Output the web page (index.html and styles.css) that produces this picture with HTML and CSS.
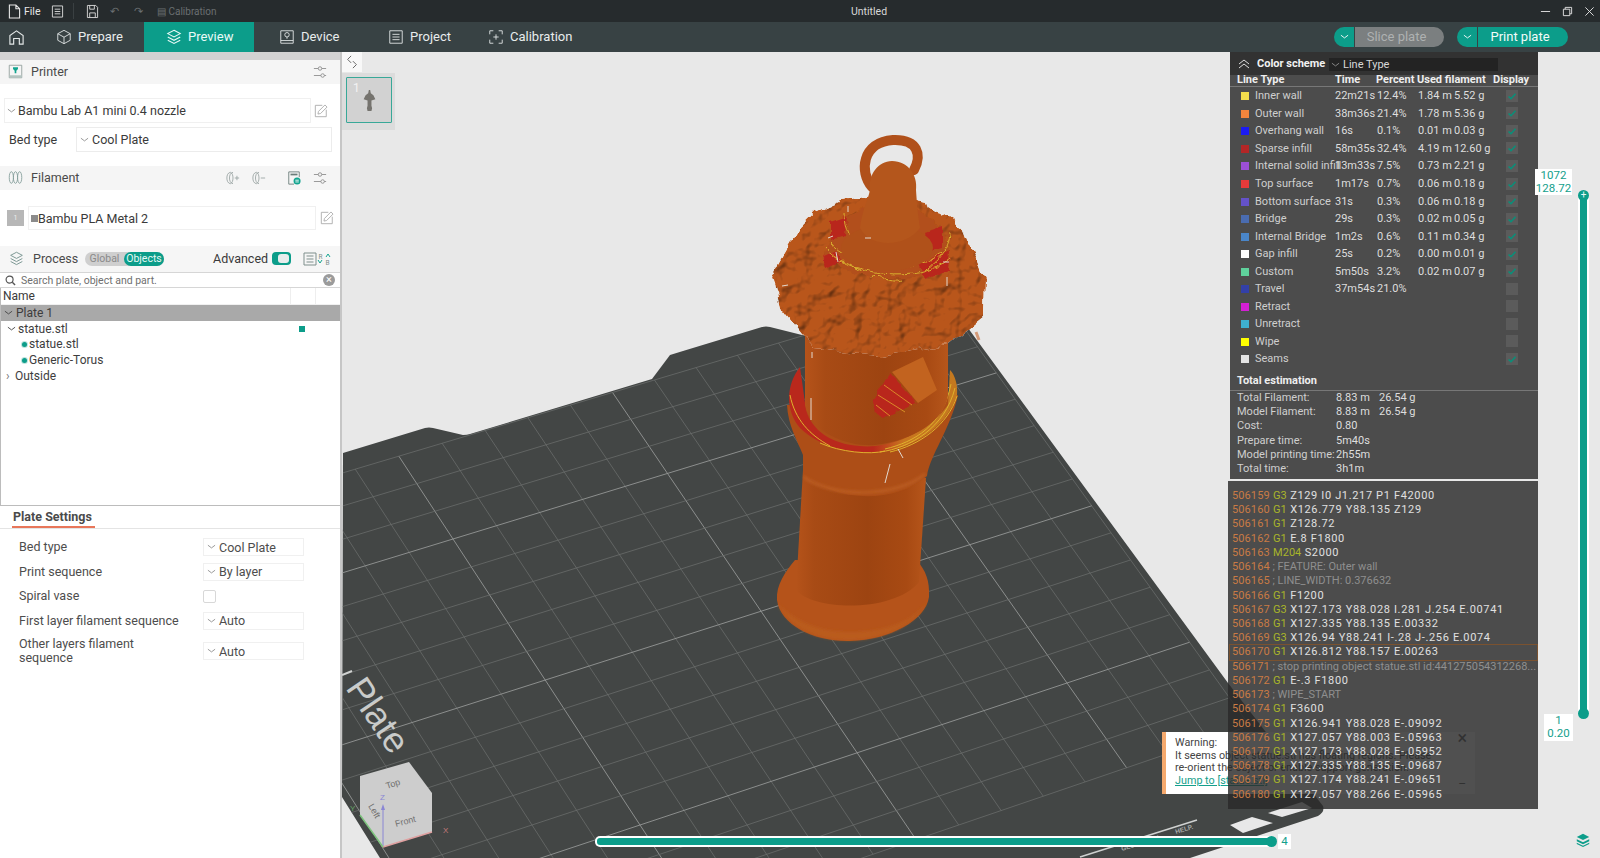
FILE: index.html
```html
<!DOCTYPE html>
<html lang="en">
<head>
<meta charset="utf-8">
<title>Untitled</title>
<link rel="stylesheet" href="styles.css">
</head>
<body>
<svg class="defs" aria-hidden="true">
  <symbol id="chev" viewBox="0 0 10 6"><path d="M1 1l4 3 4-3" fill="none" stroke="currentColor" stroke-width="1"/></symbol>
  <symbol id="edit" viewBox="0 0 16 16"><path d="M1.5 1.5h8M1.5 1.5v13h12.5v-8" fill="none" stroke="#a9a9a9"/><path d="M4.5 11.5l.6-3 7.4-7.4 2.4 2.4-7.4 7.4z" fill="none" stroke="#a9a9a9"/></symbol>
  <symbol id="tune" viewBox="0 0 16 16"><path d="M1 4h5M10 4h5M1 12h8M13 12h2" fill="none" stroke="#8d8d8d"/><circle cx="8" cy="4" r="2" fill="none" stroke="#8d8d8d"/><circle cx="11" cy="12" r="2" fill="none" stroke="#8d8d8d"/></symbol>
  <symbol id="layers" viewBox="0 0 18 18"><path d="M9 1.5l7 3.7-7 3.7-7-3.7z" fill="none" stroke="currentColor" stroke-width="1.2"/><path d="M2 9l7 3.7L16 9M2 12.6l7 3.7 7-3.7" fill="none" stroke="currentColor" stroke-width="1.2"/></symbol>
  <symbol id="layers-solid" viewBox="0 0 18 18"><path d="M9 1l8 4-8 4-8-4z" fill="currentColor"/><path d="M1 8l8 4 8-4v2.500l-8 4-8-4z" fill="currentColor"/><path d="M1 12.500l8 4 8-4V14l-8 4-8-4z" fill="currentColor"/></symbol>
  <symbol id="tick" viewBox="0 0 12 12"><path d="M2.5 6.5l2.5 2.2 4.5-5" fill="none" stroke="#0b8f79" stroke-width="1.6"/></symbol>
</svg>

<header class="titlebar">
  <svg class="ti" viewBox="0 0 14 16"><path d="M1.5 1h7l4 4v10h-11zM8.5 1v4h4" fill="none" stroke="#e6e6e6" stroke-width="1.2"/></svg>
  <span class="file">File</span>
  <svg class="ti ti-menu" viewBox="0 0 14 16"><path d="M1.5 2h11v12h-11zM4 5.5h6M4 8h6M4 10.5h6" fill="none" stroke="#d8d8d8"/></svg>
  <span class="tsep"></span>
  <svg class="ti ti-save" viewBox="0 0 14 16"><path d="M1.5 1.5h9l2 2v11h-11zM4 1.5v4h5v-4M4 14.5v-5h6v5" fill="none" stroke="#d8d8d8"/></svg>
  <span class="dim undo">↶</span>
  <span class="dim redo">↷</span>
  <span class="dim calib">▤ Calibration</span>
  <span class="doc">Untitled</span>
  <div class="winbtns">
    <svg class="wb" viewBox="0 0 12 12"><path d="M1 6h10" stroke="#e6e6e6" fill="none"/></svg>
    <svg class="wb" viewBox="0 0 12 12"><path d="M1.5 3.5h7v7h-7zM3.5 3.5v-2h7v7h-2" stroke="#e6e6e6" fill="none"/></svg>
    <svg class="wb" viewBox="0 0 12 12"><path d="M1.5 1.5l9 9M10.5 1.5l-9 9" stroke="#e6e6e6" fill="none"/></svg>
  </div>
</header>

<nav class="navbar">
  <a class="home"><svg viewBox="0 0 18 18"><path d="M2 16V7l7-5 7 5v9h-4v-6H6v6z" fill="none" stroke="#e4e8e8" stroke-width="1.2"/></svg></a>
  <a class="tab t-prepare"><svg viewBox="0 0 18 18"><path d="M9 1.5l7 3.8v7.4l-7 3.8-7-3.8V5.300zM2 5.300l7 3.900 7-3.900M9 9.200v7.300" fill="none" stroke="#e4e8e8"/></svg>Prepare</a>
  <a class="tab t-preview"><svg viewBox="0 0 18 18" class="ic-white"><use href="#layers"/></svg>Preview</a>
  <a class="tab t-device"><svg viewBox="0 0 18 18"><path d="M2 2h14v14H2zM2 13h14" fill="none" stroke="#e4e8e8"/><circle cx="9" cy="6.500" r="2.500" fill="none" stroke="#e4e8e8"/><path d="M9 9v2" stroke="#e4e8e8"/></svg>Device</a>
  <a class="tab t-project"><svg viewBox="0 0 18 18"><path d="M2 2h14v14H2zM5 6h8M5 9h8M5 12h8" fill="none" stroke="#e4e8e8"/></svg>Project</a>
  <a class="tab t-calib"><svg viewBox="0 0 18 18"><path d="M2 6V2h4M12 2h4v4M16 12v4h-4M6 16H2v-4M9 6v6M6 9h6" fill="none" stroke="#e4e8e8"/></svg>Calibration</a>
  <div class="actions">
    <div class="split"><span class="drop"><svg class="chev"><use href="#chev"/></svg></span><span class="act act-off">Slice plate</span></div>
    <div class="split"><span class="drop"><svg class="chev"><use href="#chev"/></svg></span><span class="act act-on">Print plate</span></div>
  </div>
</nav>

<main class="workspace">
  <aside class="sidebar">
    <div class="strip"></div>
    <section class="shead h-printer">
      <svg class="sic" viewBox="0 0 18 18"><path d="M1.500 1.500h15v15h-15z" fill="none" stroke="#8d9a98"/><path d="M1.500 13.500h15v3h-15z" fill="#b4c4c1"/><path d="M6 4h6v2l-2 2v3H8V8L6 6z" fill="#12a48f"/></svg>
      <span class="stitle">Printer</span>
      <svg class="tune"><use href="#tune"/></svg>
    </section>
    <div class="printer-row">
      <div class="sel sel-printer"><svg class="chev"><use href="#chev"/></svg>Bambu Lab A1 mini 0.4 nozzle</div>
      <svg class="edit"><use href="#edit"/></svg>
    </div>
    <div class="bed-row">
      <span class="bed-label">Bed type</span>
      <div class="sel sel-bed"><svg class="chev"><use href="#chev"/></svg>Cool Plate</div>
    </div>
    <section class="shead h-filament">
      <svg class="sic" viewBox="0 0 18 18"><g fill="none" stroke="#7f9a96"><ellipse cx="4" cy="9" rx="2.500" ry="7"/><ellipse cx="9" cy="9" rx="2.500" ry="7"/><ellipse cx="14" cy="9" rx="2.500" ry="7"/></g></svg>
      <span class="stitle">Filament</span>
      <svg class="fic fic-add" viewBox="0 0 16 16"><path d="M5 1.500C2 2 1 5 1 8s1 6 4 6.500M5 1.500C7 2 8 5 8 8s-1 6-3 6.500M8 1.500C5 2 4 5 4 8s1 6 4 6.500M10 8h5M12.500 5.500v5" fill="none" stroke="#9aa5a3"/></svg>
      <svg class="fic fic-del" viewBox="0 0 16 16"><path d="M5 1.500C2 2 1 5 1 8s1 6 4 6.500M5 1.500C7 2 8 5 8 8s-1 6-3 6.500M8 1.500C5 2 4 5 4 8s1 6 4 6.500M10 8h5" fill="none" stroke="#9aa5a3"/></svg>
      <svg class="fic fic-sync" viewBox="0 0 16 16"><path d="M2 1h12v6M2 1v14h6" fill="none" stroke="#6a7c79"/><path d="M4 3h8v2H4z" fill="#6a7c79"/><circle cx="11.500" cy="11.500" r="4" fill="#12a48f"/><path d="M9.500 10.500h4M9.500 12.500h4" stroke="#fff"/></svg>
      <svg class="tune"><use href="#tune"/></svg>
    </section>
    <div class="fil-row">
      <span class="fil-num">1</span>
      <div class="sel sel-fil"><span class="mini-sq"></span>Bambu PLA Metal 2</div>
      <svg class="edit"><use href="#edit"/></svg>
    </div>
    <section class="proc">
      <svg class="sic ic-muted" viewBox="0 0 18 18"><use href="#layers"/></svg>
      <span class="stitle">Process</span>
      <div class="seg"><span class="seg-a">Global</span><span class="seg-b">Objects</span></div>
      <span class="adv">Advanced</span>
      <span class="toggle"><i></i></span>
      <svg class="cmp" viewBox="0 0 29 14"><path d="M1 1h12v12H1zM3.500 4h7M3.500 7h7M3.500 10h7" fill="none" stroke="#7f8f8c"/><text x="15.500" y="6.500" class="cmp-t">R</text><text x="22.500" y="13" class="cmp-t">B</text><path d="M23 5l2-3 2 3M19 8l-2 3-2-3" fill="none" stroke="#12a48f"/></svg>
    </section>
    <div class="search">
      <svg class="lens" viewBox="0 0 12 12"><circle cx="5" cy="5" r="3.800" fill="none" stroke="#555" stroke-width="1.300"/><path d="M8 8l3 3" stroke="#555" stroke-width="1.500"/></svg>
      <span>Search plate, object and part.</span>
      <span class="clear">×</span>
    </div>
    <div class="tree">
      <div class="tree-head"><span class="th-name">Name</span><span class="th-c"></span><span class="th-c"></span></div>
      <div class="node n-plate"><svg class="chev"><use href="#chev"/></svg>Plate 1</div>
      <div class="node n-obj"><svg class="chev"><use href="#chev"/></svg>statue.stl<span class="mark"></span></div>
      <div class="node n-part"><i class="dot"></i>statue.stl</div>
      <div class="node n-part"><i class="dot"></i>Generic-Torus</div>
      <div class="node n-out"><span class="caret">›</span>Outside</div>
    </div>
    <section class="settings">
      <div class="set-tab"><span>Plate Settings</span></div>
      <div class="set-row"><label>Bed type</label><div class="sel sel-s"><svg class="chev"><use href="#chev"/></svg>Cool Plate</div></div>
      <div class="set-row"><label>Print sequence</label><div class="sel sel-s"><svg class="chev"><use href="#chev"/></svg>By layer</div></div>
      <div class="set-row"><label>Spiral vase</label><span class="cb"></span></div>
      <div class="set-row"><label>First layer filament sequence</label><div class="sel sel-s"><svg class="chev"><use href="#chev"/></svg>Auto</div></div>
      <div class="set-row tall"><label>Other layers filament<br>sequence</label><div class="sel sel-s"><svg class="chev"><use href="#chev"/></svg>Auto</div></div>
    </section>
  </aside>

  <section class="viewport">
    <svg class="scene" viewBox="342 52 1258 806" preserveAspectRatio="none">
      <defs>
        <clipPath id="plateclip"><path id="plateshape" d="M343 453L425 428Q429 427 433 428L463 435Q467 435 470 434L652 379L670 355L683 351L762 327Q766 326 770 327L802 335L812 335L925 283L935 283L1228 683L1323 806Q1325 812 1318 816L1190 858L380 858L342 797Z"/></clipPath>
        <linearGradient id="body" x1="0" x2="1" y1="0" y2="0">
          <stop offset="0" stop-color="#b5531a"/><stop offset=".14" stop-color="#a84b15"/><stop offset=".55" stop-color="#9d4411"/><stop offset=".85" stop-color="#a84a13"/><stop offset="1" stop-color="#b6561b"/>
        </linearGradient>
        <linearGradient id="rimband" x1="0" x2="1" y1="0" y2="0">
          <stop offset="0" stop-color="#b9281c"/><stop offset=".5" stop-color="#b9281c"/><stop offset=".68" stop-color="#c9761f"/><stop offset="1" stop-color="#c4791f"/>
        </linearGradient>
        <filter id="lumpy" x="-5%" y="-5%" width="110%" height="110%" color-interpolation-filters="sRGB">
          <feTurbulence type="fractalNoise" baseFrequency=".05" numOctaves="3" seed="7" result="n"/>
          <feDisplacementMap in="SourceGraphic" in2="n" scale="12" xChannelSelector="R" yChannelSelector="G" result="d"/>
          <feDiffuseLighting in="n" surfaceScale="4" diffuseConstant="1.150" lighting-color="#fff" result="l"><feDistantLight azimuth="235" elevation="62"/></feDiffuseLighting>
          <feBlend in="d" in2="l" mode="multiply" result="m"/>
          <feComposite in="m" in2="d" operator="in"/>
        </filter>
        <filter id="wavy" x="-10%" y="-10%" width="120%" height="120%">
          <feTurbulence type="fractalNoise" baseFrequency=".12" numOctaves="2" seed="3" result="w"/>
          <feDisplacementMap in="SourceGraphic" in2="w" scale="7" xChannelSelector="R" yChannelSelector="G"/>
        </filter>
        <filter id="soft"><feGaussianBlur stdDeviation="1.500"/></filter>
      </defs>

      <use href="#plateshape" class="plate"/>
      <g id="grid" clip-path="url(#plateclip)"></g>
      <path class="hole" d="M1230 825L1252 817L1273 823L1243 833Z"/>
      <path class="hole" d="M1268 813L1302 802L1312 808L1282 817Z"/>
      <path class="stripe" d="M1080 857L1197 820"/>
      <text class="plate-small" transform="translate(1122 851) rotate(-17)">GLUE STICK</text>
      <text class="plate-small" transform="translate(1176 834) rotate(-17)">HELP.</text>
      <text class="plate-word" transform="translate(345 688) rotate(56)">Plate</text>
      <path class="stripe-g" d="M342 675L352 671"/>

      <!-- printed statue -->
      <path d="M872 187C859 172 862 142 893 140C918 139 922 155 914 170" fill="none" stroke="#b0501a" stroke-width="10" stroke-linecap="round"/>
      <path d="M795 560C785 572 776 585 777 600C780 625 815 642 850 641C890 640 926 620 929 597C930 580 925 570 918 562Z" fill="#b5531a"/>
      <path d="M803 470L796 590C815 612 895 612 919 582L926 478Z" fill="url(#body)"/>
      <path d="M778 604C790 628 815 640 850 640C890 639 918 622 928 600C915 622 885 632 850 632C820 632 795 622 778 604Z" fill="#ba5c1f" filter="url(#soft)"/>
      <path d="M787 405C788 425 797 440 803 455L803 472C830 502 895 505 927 476C930 455 950 430 958 395Z" fill="#ad4e17"/>
      <path d="M804 477C830 497 895 499 925 474" fill="none" stroke="#bd5f24" stroke-width="2.500" filter="url(#soft)"/>
      <path d="M800 367C786 385 785 410 800 428C820 447 850 454 875 453C910 450 945 430 957 395C958 385 955 375 950 370L948 405C925 438 880 449 860 446C830 444 812 430 806 410Z" fill="url(#rimband)"/>
      <path d="M880 452C910 448 945 428 955 388M885 449C915 442 943 425 951 384M890 452C920 445 948 425 957 396M820 443C840 452 870 455 885 451M790 395C795 420 810 435 830 446" fill="none" stroke="#dfb22d" stroke-width="1"/>
      <path d="M805 335L805 405C812 435 850 447 875 445C915 440 945 420 948 395L948 335Z" fill="url(#body)"/>
      <g filter="url(#wavy)"><path d="M873 400L890 373L917 403L883 418L875 414Z" fill="#b9261d"/></g>
      <path d="M878 395L905 412M884 385L912 405M876 405L890 416" fill="none" stroke="#e2a22c" stroke-width=".8"/>
      <path d="M892 372L923 357L937 390L918 403Z" fill="#c2631f"/>
      <path class="seam" d="M811 398V420M812 352V358M898 449L903 458M890 464L885 483"/>

      <g filter="url(#lumpy)">
        <path d="M840 200L817 210L800 227L772 275L780 307L800 333L815 350L880 356L948 345L983 317L984 280L963 227L925 203L885 195Z" fill="#b9561b"/>
      </g>
      <path d="M976 332L979 340" stroke="#d49a78" stroke-width="3"/>
      <g filter="url(#wavy)">
        <path d="M825 255C830 225 850 205 890 205C930 205 950 235 950 262C930 285 850 285 825 255Z" fill="#b2501a"/>
        <path d="M830 222L848 216L846 236L830 240ZM822 258L837 252L842 262L825 268ZM925 232L942 226L942 248L928 252ZM918 264L950 250L948 270L925 280Z" fill="#b9261e"/>
        <path d="M825 248C845 275 920 285 950 258M830 242C850 268 915 278 946 250M845 212C845 228 850 240 860 248M950 232C950 250 935 265 925 270M838 262C845 258 855 268 862 272M870 278C880 272 890 285 900 280" fill="none" stroke="#d9b030" stroke-width="1"/>
      </g>
      <ellipse cx="887" cy="248" rx="46" ry="23" fill="#b0511a"/>
      <path d="M860 228C862 210 868 200 870 190C868 175 878 161 892 161C908 161 918 175 916 190C917 205 918 215 920 228C905 248 870 248 860 228Z" fill="#b4561c"/>
      <path class="seam" d="M848 206V212M828 238L833 236M836 252L838 262M943 262L949 262M947 277V286M782 286L788 285M865 238L871 238"/>

      <!-- navigation cube -->
      <g class="cube">
        <path d="M360 776L409 762L432 793L432 832L383 847L360 815Z" fill="#cdcdcd"/>
        <text class="cube-t" transform="translate(387 789) rotate(-18)">Top</text>
        <text class="cube-t" transform="translate(396 827) rotate(-15)">Front</text>
        <text class="cube-t" transform="translate(368 806) rotate(60)">Left</text>
        <path d="M383 847V808" stroke="#8a86d4"/><path d="M383 804l-2 6h4z" fill="#8a86d4"/>
        <path d="M383 847L432 832" stroke="#e0a0a0" stroke-width="1.500"/>
        <path d="M383 847L360 815" stroke="#7dc47d" stroke-width="1.500"/>
        <text class="axis ax-z" x="380" y="800">Z</text>
        <text class="axis ax-x" x="443" y="833">X</text>
        <text class="axis ax-y" x="350" y="811">Y</text>
      </g>
    </svg>

    <button class="collapse"><svg viewBox="0 0 14 16"><path d="M6 1L2 5l4 4M8 7l4 4-4 4" fill="none" stroke="#555"/></svg></button>
    <div class="thumbs"><div class="thumb"><span>1</span>
      <svg viewBox="0 0 20 34"><path d="M9 1h2l1 5 4 3 3 6-6 2v8l1 4-1 4H7l-1-4 1-4v-8l-6-2 3-6 4-3z" fill="#75736e"/></svg>
    </div></div>

    <div class="warning">
      <div>Warning:</div>
      <div>It seems object statue.stl has floating regions. Please</div>
      <div>re-orient the object or enable support generation.</div>
      <a>Jump to [statue.stl]</a>
      <span class="w-x">×</span>
      <span class="w-m">–</span>
    </div>

    <section class="legend">
      <div class="lg-top">
        <svg class="lg-up" viewBox="0 0 12 10"><path d="M1 5l5-4 5 4M1 9l5-4 5 4" fill="none" stroke="#ddd"/></svg>
        <b>Color scheme</b>
        <div class="lg-sel"><svg class="chev"><use href="#chev"/></svg>Line Type</div>
      </div>
      <div class="lg-head"><span>Line Type</span><span>Time</span><span>Percent</span><span>Used filament</span><span>Display</span></div>
      <div class="lg-body">
        <div class="lg-row"><span class="name"><i class="c1"></i>Inner wall</span><span>22m21s</span><span>12.4%</span><span>1.84 m</span><span>5.52 g</span><span class="ck"><svg><use href="#tick"/></svg></span></div>
        <div class="lg-row"><span class="name"><i class="c2"></i>Outer wall</span><span>38m36s</span><span>21.4%</span><span>1.78 m</span><span>5.36 g</span><span class="ck"><svg><use href="#tick"/></svg></span></div>
        <div class="lg-row"><span class="name"><i class="c3"></i>Overhang wall</span><span>16s</span><span>0.1%</span><span>0.01 m</span><span>0.03 g</span><span class="ck"><svg><use href="#tick"/></svg></span></div>
        <div class="lg-row"><span class="name"><i class="c4"></i>Sparse infill</span><span>58m35s</span><span>32.4%</span><span>4.19 m</span><span>12.60 g</span><span class="ck"><svg><use href="#tick"/></svg></span></div>
        <div class="lg-row"><span class="name"><i class="c5"></i>Internal solid infill</span><span>13m33s</span><span>7.5%</span><span>0.73 m</span><span>2.21 g</span><span class="ck"><svg><use href="#tick"/></svg></span></div>
        <div class="lg-row"><span class="name"><i class="c6"></i>Top surface</span><span>1m17s</span><span>0.7%</span><span>0.06 m</span><span>0.18 g</span><span class="ck"><svg><use href="#tick"/></svg></span></div>
        <div class="lg-row"><span class="name"><i class="c7"></i>Bottom surface</span><span>31s</span><span>0.3%</span><span>0.06 m</span><span>0.18 g</span><span class="ck"><svg><use href="#tick"/></svg></span></div>
        <div class="lg-row"><span class="name"><i class="c8"></i>Bridge</span><span>29s</span><span>0.3%</span><span>0.02 m</span><span>0.05 g</span><span class="ck"><svg><use href="#tick"/></svg></span></div>
        <div class="lg-row"><span class="name"><i class="c9"></i>Internal Bridge</span><span>1m2s</span><span>0.6%</span><span>0.11 m</span><span>0.34 g</span><span class="ck"><svg><use href="#tick"/></svg></span></div>
        <div class="lg-row"><span class="name"><i class="c10"></i>Gap infill</span><span>25s</span><span>0.2%</span><span>0.00 m</span><span>0.01 g</span><span class="ck"><svg><use href="#tick"/></svg></span></div>
        <div class="lg-row"><span class="name"><i class="c11"></i>Custom</span><span>5m50s</span><span>3.2%</span><span>0.02 m</span><span>0.07 g</span><span class="ck"><svg><use href="#tick"/></svg></span></div>
        <div class="lg-row"><span class="name"><i class="c12"></i>Travel</span><span>37m54s</span><span>21.0%</span><span></span><span></span><span class="ck"></span></div>
        <div class="lg-row"><span class="name"><i class="c13"></i>Retract</span><span></span><span></span><span></span><span></span><span class="ck"></span></div>
        <div class="lg-row"><span class="name"><i class="c14"></i>Unretract</span><span></span><span></span><span></span><span></span><span class="ck"></span></div>
        <div class="lg-row"><span class="name"><i class="c15"></i>Wipe</span><span></span><span></span><span></span><span></span><span class="ck"></span></div>
        <div class="lg-row"><span class="name"><i class="c16"></i>Seams</span><span></span><span></span><span></span><span></span><span class="ck"><svg><use href="#tick"/></svg></span></div>
      </div>
      <div class="lg-total"><b>Total estimation</b></div>
      <div class="lg-stats">
        <div><span>Total Filament:</span><span>8.83 m</span><span>26.54 g</span></div>
        <div><span>Model Filament:</span><span>8.83 m</span><span>26.54 g</span></div>
        <div><span>Cost:</span><span>0.80</span><span></span></div>
        <div><span>Prepare time:</span><span>5m40s</span><span></span></div>
        <div><span>Model printing time:</span><span>2h55m</span><span></span></div>
        <div><span>Total time:</span><span>3h1m</span><span></span></div>
      </div>
    </section>

    <section class="gcode">
      <div><em>506159</em> <b>G3</b> Z129 I0 J1.217 P1 F42000</div>
      <div><em>506160</em> <b>G1</b> X126.779 Y88.135 Z129</div>
      <div><em>506161</em> <b>G1</b> Z128.72</div>
      <div><em>506162</em> <b>G1</b> E.8 F1800</div>
      <div><em>506163</em> <b>M204</b> S2000</div>
      <div class="cm"><em>506164</em> ; FEATURE: Outer wall</div>
      <div class="cm"><em>506165</em> ; LINE_WIDTH: 0.376632</div>
      <div><em>506166</em> <b>G1</b> F1200</div>
      <div><em>506167</em> <b>G3</b> X127.173 Y88.028 I.281 J.254 E.00741</div>
      <div><em>506168</em> <b>G1</b> X127.335 Y88.135 E.00332</div>
      <div><em>506169</em> <b>G3</b> X126.94 Y88.241 I-.28 J-.256 E.0074</div>
      <div class="cur"><em>506170</em> <b>G1</b> X126.812 Y88.157 E.00263</div>
      <div class="cm"><em>506171</em> ; stop printing object statue.stl id:441275054312268...</div>
      <div><em>506172</em> <b>G1</b> E-.3 F1800</div>
      <div class="cm"><em>506173</em> ; WIPE_START</div>
      <div><em>506174</em> <b>G1</b> F3600</div>
      <div><em>506175</em> <b>G1</b> X126.941 Y88.028 E-.09092</div>
      <div><em>506176</em> <b>G1</b> X127.057 Y88.003 E-.05963</div>
      <div><em>506177</em> <b>G1</b> X127.173 Y88.028 E-.05952</div>
      <div><em>506178</em> <b>G1</b> X127.335 Y88.135 E-.09687</div>
      <div><em>506179</em> <b>G1</b> X127.174 Y88.241 E-.09651</div>
      <div><em>506180</em> <b>G1</b> X127.057 Y88.266 E-.05965</div>
    </section>

    <div class="vslider"><i class="knob-top">+</i><i class="knob-bot"></i></div>
    <div class="vlabel vl-top">1072<br>128.72</div>
    <div class="vlabel vl-bot">1<br>0.20</div>
    <div class="hslider"><i></i></div>
    <div class="hlabel">4</div>
    <svg class="layer-btn"><use href="#layers-solid"/></svg>
  </section>
</main>
<script src="grid.js"></script>
</body>
</html>
```

FILE: styles.css
```css
* { box-sizing: border-box; }
html, body { margin: 0; height: 100%; }
body {
  width: 1600px; height: 858px; overflow: hidden;
  display: flex; flex-direction: column;
  font-family: Roboto, "Noto Sans", "Liberation Sans", sans-serif;
  font-size: 13px; color: #3a3a3a; background: #fff;
}
.defs { position: absolute; width: 0; height: 0; }
.chev { width: 9px; height: 6px; color: #8e8e8e; flex: none; }

/* title bar */
.titlebar {
  height: 22px; flex: none; background: #262b2d; color: #e6e6e6;
  display: flex; align-items: center; font-size: 10.5px; padding-left: 8px;
}
.ti { width: 13px; height: 15px; flex: none; }
.file { margin-left: 3px; width: 27px; }
.tsep { width: 1px; height: 16px; background: #3a4042; margin: 0 12px 0 9px; }
.dim { color: #6a6f71; }
.undo { margin-left: 11px; }
.redo { margin-left: 15px; }
.calib { margin-left: 14px; font-size: 10px; }
.doc { position: absolute; left: 851px; top: 5px; color: #d8d8d8; }
.winbtns { margin-left: auto; display: flex; gap: 11px; padding-right: 5px; }
.wb { width: 11px; height: 11px; }

/* nav */
.navbar {
  height: 30px; flex: none; background: #384244; color: #e8ecec;
  display: flex; align-items: stretch; position: relative;
}
.home { width: 32px; display: flex; align-items: center; justify-content: center; }
.home svg { width: 17px; height: 17px; }
.tab { display: flex; align-items: center; gap: 6px; font-size: 13px; padding-bottom: 1px; }
.tab svg { width: 16px; height: 16px; flex: none; }
.t-prepare { width: 112px; padding-left: 24px; }
.t-preview { width: 110px; padding-left: 22px; background: #0c9d8a; color: #eafaf7; }
.ic-white { color: #eafaf7; }
.t-device { width: 109px; padding-left: 25px; }
.t-project { width: 100px; padding-left: 25px; }
.t-calib { padding-left: 25px; }
.actions { margin-left: auto; display: flex; gap: 13px; padding: 5px 32px 5px 0; }
.split { display: flex; height: 20px; gap: 1px; }
.drop {
  width: 20px; background: #0c9d8a; border-radius: 10px 0 0 10px;
  display: flex; align-items: center; justify-content: center;
}
.drop .chev { color: #fff; }
.act { display: flex; align-items: center; justify-content: center; border-radius: 0 10px 10px 0; padding: 0 6px 1px 0; }
.act-off { width: 89px; background: #7b7f80; color: #aeb1b1; }
.act-on { width: 90px; background: #0c9d8a; color: #f2fbf9; }

/* sidebar */
.workspace { flex: 1; display: flex; min-height: 0; }
.sidebar {
  width: 342px; flex: none; background: #fff; border-right: 2px solid #c6c6c6;
  display: flex; flex-direction: column; font-size: 12.5px;
}
.strip { height: 8px; background: #d2d2d2; flex: none; }
.shead { height: 24px; flex: none; background: #f5f5f5; display: flex; align-items: center; padding: 0 0 2px 8px; position: relative; }
.sic { width: 15px; height: 15px; flex: none; }
.ic-muted { color: #7f9a96; }
.stitle { margin-left: 8px; color: #4a4a4a; }
.tune { width: 14px; height: 14px; position: absolute; right: 13px; top: 5px; }
.sel { display: flex; align-items: center; gap: 3px; border: 1px solid #f0f0f0; background: #fff; }
.printer-row { height: 25px; margin-top: 14px; flex: none; display: flex; align-items: center; padding-left: 4px; }
.sel-printer { width: 307px; height: 25px; padding-left: 2px; gap: 2px; }
.edit { width: 14px; height: 14px; flex: none; }
.printer-row .edit { margin-left: 3px; }
.bed-row { height: 25px; margin-top: 4px; flex: none; display: flex; align-items: center; padding-left: 9px; }
.bed-label { width: 67px; }
.sel-bed { width: 256px; height: 25px; padding-left: 3px; border-color: #ececec; }
.h-filament { margin-top: 14px; }
.fic { width: 14px; height: 14px; position: absolute; top: 5px; }
.fic-add { left: 226px; }
.fic-del { left: 252px; }
.fic-sync { left: 287px; }
.fil-row { height: 24px; margin-top: 16px; flex: none; display: flex; align-items: center; padding-left: 7px; }
.fil-num { width: 17px; height: 16px; background: #b7b7b7; color: #eee; font-size: 7px; display: flex; align-items: center; justify-content: center; }
.sel-fil { width: 288px; height: 24px; margin-left: 4px; padding-left: 1px; gap: 0; }
.mini-sq { width: 7px; height: 7px; background: #8b8b8b; flex: none; margin-left: 1px; }
.fil-row .edit { margin-left: 4px; }
.proc {
  height: 26px; flex: none; margin-top: 16px; background: #f6f6f6;
  display: flex; align-items: center; padding: 0 0 1px 9px;
}
.proc .stitle { margin-left: 9px; width: 52px; }
.seg { display: flex; height: 14px; width: 79px; background: #cfcfcf; border-radius: 7px; font-size: 10.5px; flex: none; }
.seg-a { width: 39px; text-align: center; color: #8a8a8a; line-height: 14px; }
.seg-b { flex: 1; text-align: center; background: #0c9d8a; color: #e8f9f6; border-radius: 7px; line-height: 14px; }
.adv { margin-left: 49px; width: 59px; flex: none; }
.toggle { width: 19px; height: 13px; background: #0c9d8a; border-radius: 4px; padding: 2px; display: flex; justify-content: flex-end; flex: none; }
.toggle i { width: 11px; height: 9px; background: #e8eded; border-radius: 3px; }
.cmp { width: 29px; height: 14px; margin-left: 12px; flex: none; }
.cmp-t { font-size: 6.500px; fill: #7f8f8c; }
.search {
  height: 16px; flex: none; display: flex; align-items: center; padding: 0 5px;
  border-top: 1px solid #d6d6d6; border-bottom: 1px solid #d6d6d6;
  font-size: 10.5px; color: #6f6f6f; gap: 5px;
}
.lens { width: 11px; height: 11px; flex: none; }
.clear {
  margin-left: auto; width: 12px; height: 12px; background: #9b9b9b; color: #fff;
  border-radius: 50%; font-size: 11px; line-height: 11px; text-align: center;
}
.tree { height: 218px; flex: none; border-left: 1px solid #bcbcbc; border-bottom: 1px solid #bcbcbc; }
.tree-head { height: 17px; display: flex; font-size: 12px; line-height: 17px; border-bottom: 1px solid #f0f0f0; }
.th-name { flex: 1; padding-left: 2px; }
.th-c { width: 25px; border-left: 1px solid #eee; }
.node { height: 15.800px; display: flex; align-items: center; position: relative; color: #3d3d3d; font-size: 12px; }
.n-plate { background: #a9a9a9; padding-left: 3px; gap: 3px; }
.n-plate .chev, .n-obj .chev { color: #444; }
.n-obj { padding-left: 6px; gap: 2px; }
.n-part { padding-left: 21px; gap: 2px; }
.n-out { padding-left: 5px; gap: 5px; }
.caret { color: #777; font-size: 12px; width: 4px; }
.dot { width: 5px; height: 5px; border-radius: 50%; background: #0c9d8a; box-shadow: 0 0 0 1px #bfe3dd; flex: none; }
.mark { position: absolute; left: 298px; top: 5px; width: 6px; height: 6px; background: #0c9d8a; }
.settings { flex: 1; font-size: 12.5px; color: #4d4d4d; }
.set-tab { height: 23px; border-bottom: 1px solid #e4e4e4; padding-left: 12px; }
.set-tab span {
  display: inline-block; height: 22px; padding: 3px 1px 0; font-weight: 700; color: #4a4a4a;
  border-bottom: 2px solid #e8765a; width: 83px;
}
.set-row { display: flex; align-items: center; height: 24.500px; padding-left: 19px; }
.set-row:nth-child(2) { margin-top: 6px; }
.set-row label { width: 184px; flex: none; line-height: 14.500px; }
.set-row.tall { height: 36px; margin-top: 0; }
.sel-s { width: 101px; height: 18px; padding-left: 3px; gap: 3px; font-size: 12.5px; }
.cb { width: 13px; height: 13px; border: 1px solid #d8d8d8; border-radius: 2px; }

/* viewport */
.viewport { flex: 1; position: relative; background: #e8e8e8; overflow: hidden; }
.scene { position: absolute; inset: 0; width: 100%; height: 100%; display: block; }
.plate { fill: #434645; }
.hole { fill: #e8e8e8; }
.stripe { stroke: #cfd1d0; stroke-width: 1.500; fill: none; }
.stripe-g { stroke: #d0d2d1; stroke-width: 2; fill: none; }
.plate-small { font: 700 6.500px "Liberation Sans", sans-serif; fill: #a9abaa; }
.plate-word { font: 400 36px "Liberation Sans", sans-serif; fill: #c9cbca; }
.seam { fill: none; stroke: #e2d9cf; stroke-width: 1; }
.grid-major { stroke: #949695; stroke-width: .9; }
.grid-minor { stroke: #6f7170; stroke-width: .7; }
.cube-t { font: 9px "Liberation Sans", sans-serif; fill: #6f6f6f; }
.axis { font: 8px "Liberation Sans", sans-serif; }
.ax-z { fill: #8a86d4; }
.ax-x { fill: #c47a7a; }
.ax-y { fill: #66a566; }

.collapse {
  position: absolute; left: 0; top: 0; width: 20px; height: 20px; padding: 3px;
  background: #f8f8f8; border: 0; display: block;
}
.collapse svg { width: 14px; height: 14px; display: block; }
.thumbs {
  position: absolute; left: 0; top: 21px; width: 53px; height: 57px;
  background: #dcdcdc; padding: 4px;
}
.thumb {
  width: 46px; height: 46px; border: 1px solid #38a898; background: #d2d2d2; position: relative;
  display: flex; align-items: center; justify-content: center; border-radius: 1px;
}
.thumb svg { width: 13px; height: 25px; }
.thumb span { position: absolute; left: 6px; top: 3px; color: #f2f2f2; font-size: 12px; }

.warning {
  position: absolute; left: 820px; top: 680px; width: 313px; height: 62px;
  background: #fff; border-left: 4px solid #f5a96d; padding: 5px 0 0 9px;
  font-size: 10.800px; line-height: 12.600px; color: #444; white-space: nowrap;
}
.warning a { color: #14a08c; text-decoration: underline; }
.w-x { position: absolute; right: 8px; top: 0; font-size: 18px; color: #555; }
.w-m { position: absolute; right: 9px; bottom: 3px; font-size: 12px; color: #555; }

.legend {
  position: absolute; left: 888px; top: 0; width: 308px; height: 427px;
  background: rgba(41,41,41,.82); color: #dedede; font-size: 11px;
}
.lg-top { height: 23px; background: rgba(20,20,20,.45); display: flex; align-items: center; position: relative; }
.lg-up { width: 12px; height: 10px; margin-left: 8px; }
.lg-top b { margin-left: 7px; color: #f2f2f2; font-weight: 700; }
.lg-sel {
  position: absolute; left: 99px; top: 6px; width: 169px; height: 13px; background: #232323;
  display: flex; align-items: center; gap: 3px; padding-left: 2px; color: #d8d8d8;
}
.lg-head {
  display: grid; grid-template-columns: 98px 41px 41px 76px auto; height: 13px; margin-top: -1px;
  padding-left: 7px; font-weight: 700; line-height: 12px; color: #eee;
  border-bottom: 1px solid #777;
}
.lg-row {
  display: grid; grid-template-columns: 98px 42px 41px 36px 52px 12px; align-items: center;
  height: 17.550px; padding-left: 7px; white-space: nowrap;
}
.name { position: relative; padding-left: 18px; color: #cfcfcf; }
.name i { position: absolute; left: 4px; top: 3px; width: 8px; height: 8px; }
.c1 { background: #f2dd4c; } .c2 { background: #f2853d; } .c3 { background: #1b1bf2; }
.c4 { background: #b32626; } .c5 { background: #9c4fd6; } .c6 { background: #e63a3a; }
.c7 { background: #6452c8; } .c8 { background: #4a6cb0; } .c9 { background: #4a86c9; }
.c10 { background: #fff; } .c11 { background: #5fd19c; } .c12 { background: #3340a8; }
.c13 { background: #d41fd4; } .c14 { background: #3eb0d0; } .c15 { background: #ffff00; } .c16 { background: #e4e4e4; }
.ck { width: 12px; height: 12px; background: #5b5b5b; display: block; }
.ck svg { width: 12px; height: 12px; display: block; }
.lg-total { height: 18px; margin-top: 5px; padding-left: 7px; border-bottom: 1px solid #777; line-height: 15px; color: #eee; }
.lg-stats { padding-left: 7px; }
.lg-stats div { display: grid; grid-template-columns: 99px 43px auto; height: 14.250px; line-height: 14.250px; white-space: nowrap; }
.lg-stats span:first-child { color: #cfcfcf; }

.gcode {
  position: absolute; left: 886px; top: 429px; width: 310px; height: 328px;
  background: rgba(41,41,41,.82); color: #e0e0e0; font-size: 11px;
  padding: 8px 0 0 4px; letter-spacing: .65px;
}
.gcode div { height: 14.220px; line-height: 14.220px; white-space: nowrap; }
.gcode em { font-style: normal; color: #c97b45; letter-spacing: .1px; }
.gcode b { font-weight: 400; color: #a9b52a; letter-spacing: 0; }
.gcode .cm { color: #8f8f8f; letter-spacing: 0; }
.gcode .cur { outline: 1px solid #7a5230; margin: 0 1px 0 -2px; padding-left: 2px; }

.vslider {
  position: absolute; left: 1238px; top: 143px; width: 7px; height: 519px;
  background: #0c9d8a; box-shadow: 0 0 0 2px #fff;
}
.knob-top, .knob-bot {
  position: absolute; left: -2px; width: 11px; height: 11px; border-radius: 50%; background: #0c9d8a;
  font-style: normal; color: #e8f9f6; font-size: 10px; line-height: 10px; text-align: center;
}
.knob-top { top: -5px; }
.knob-bot { bottom: -5px; }
.vlabel {
  position: absolute; background: #fff; color: #14a08c; font-size: 11.500px; line-height: 13px;
  text-align: center;
}
.vl-top { left: 1193px; top: 117px; width: 37px; height: 26px; }
.vl-bot { left: 1202px; top: 662px; width: 29px; height: 27px; }
.hslider {
  position: absolute; left: 255px; top: 786px; width: 675px; height: 7px;
  background: #0c9d8a; box-shadow: 0 0 0 2px #fff; border-radius: 3px;
}
.hslider i {
  position: absolute; right: -5px; top: -2px; width: 11px; height: 11px; border-radius: 50%; background: #0c9d8a;
}
.hlabel {
  position: absolute; left: 936px; top: 782px; width: 13px; height: 15px; background: #fff;
  color: #14a08c; font-size: 11.500px; text-align: center; line-height: 15px;
}
.layer-btn { position: absolute; left: 1234px; top: 781px; width: 14px; height: 14px; color: #0c9d8a; }
```

FILE: grid.js
```js
// Perspective grid of the build plate, from four measured crossings.
(function () {
  var q = [[453, 539], [875, 410], [1067, 683], [640, 825]];
  var x0 = q[0][0], y0 = q[0][1], x1 = q[1][0], y1 = q[1][1];
  var x2 = q[2][0], y2 = q[2][1], x3 = q[3][0], y3 = q[3][1];
  var dx1 = x1 - x2, dx2 = x3 - x2, sx = x0 - x1 + x2 - x3;
  var dy1 = y1 - y2, dy2 = y3 - y2, sy = y0 - y1 + y2 - y3;
  var den = dx1 * dy2 - dx2 * dy1;
  var g = (sx * dy2 - dx2 * sy) / den, h = (dx1 * sy - sx * dy1) / den;
  var a = x1 - x0 + g * x1, b = x3 - x0 + h * x3, d = y1 - y0 + g * y1, e = y3 - y0 + h * y3;
  function P(i, j) {
    var u = i / 10, v = j / 10, w = g * u + h * v + 1;
    return [(a * u + b * v + x0) / w, (d * u + e * v + y0) / w];
  }
  var root = document.getElementById('grid');
  function line(p, r, major) {
    var el = document.createElementNS('http://www.w3.org/2000/svg', 'line');
    el.setAttribute('x1', p[0]); el.setAttribute('y1', p[1]);
    el.setAttribute('x2', r[0]); el.setAttribute('y2', r[1]);
    el.setAttribute('class', major ? 'grid-major' : 'grid-minor');
    root.appendChild(el);
  }
  var i, j;
  for (i = -6; i <= 13; i++) line(P(i, -3), P(i, 13), i % 5 === 0);
  for (j = -3; j <= 13; j++) line(P(-6, j), P(13, j), j % 5 === 0);
})();
```
